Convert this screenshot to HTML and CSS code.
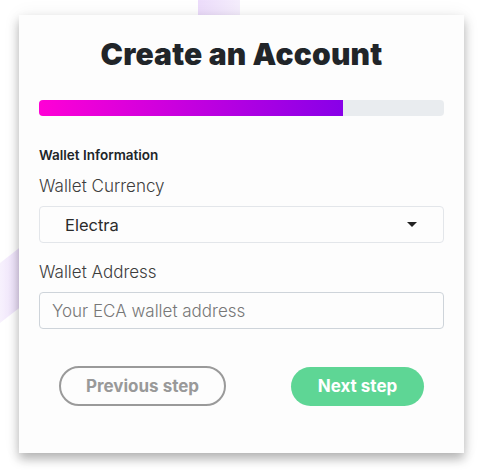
FILE: index.html
```html
<!DOCTYPE html>
<html lang="en">
<head>
<meta charset="utf-8">
<title>Create an Account</title>
<link rel="stylesheet" href="styles.css">
</head>
<body>
<div class="bg-strip"></div>
<div class="bg-band"></div>
<main class="card">
  <h1 class="title">Create an Account</h1>
  <div class="progress"><div class="progress-fill" style="width: 75%"></div></div>
  <h2 class="section">Wallet Information</h2>
  <label class="label">Wallet Currency</label>
  <div class="select">
    <span class="select-value">Electra</span>
    <span class="caret"></span>
  </div>
  <label class="label">Wallet Address</label>
  <div class="input"><span class="placeholder">Your ECA wallet address</span></div>
  <div class="actions">
    <button class="btn btn-prev">Previous step</button>
    <button class="btn btn-next">Next step</button>
  </div>
</main>
</body>
</html>
```
FILE: styles.css
```css
* { box-sizing: border-box; }
html, body { margin: 0; padding: 0; }
body {
  width: 493px;
  height: 474px;
  background: #fff;
  font-family: "Inter", "Open Sans", sans-serif;
  position: relative;
  overflow: hidden;
  padding: 15px 0 0 19px;
}
.bg-strip {
  position: absolute;
  left: 198px;
  top: 0;
  width: 42px;
  height: 30px;
  background: linear-gradient(90deg, #ecdcfb, #f5eefd);
}
.bg-band {
  position: absolute;
  left: 0;
  top: 263px;
  width: 40px;
  height: 60px;
  background: linear-gradient(90deg, #f7f1fd, #e4d0fa);
  transform: skewY(-38deg);
  transform-origin: left top;
}
.card {
  position: relative;
  width: 445px;
  height: 438px;
  background: #fdfdfd;
  box-shadow: 0 6px 10px rgba(0,0,0,0.28), 0 0 18px rgba(0,0,0,0.06);
  padding: 20px 20px 0;
  display: flex;
  flex-direction: column;
}
.title {
  margin: 0;
  text-align: center;
  font-size: 30px;
  font-weight: 900;
  line-height: 36px;
  letter-spacing: 0.2px;
  color: #212529;
  height: 36px;
  margin-top: 1px;
  margin-bottom: 3px;
}
.progress {
  margin-top: 25px;
  height: 16px;
  border-radius: 4px;
  background: #e9ecef;
  overflow: hidden;
}
.progress-fill {
  height: 100%;
  background: linear-gradient(90deg, #ff00d6, #8800e8);
}
.section {
  margin: 31px 0 0;
  font-size: 13.5px;
  font-weight: 600;
  line-height: 17px;
  color: #212529;
}
.label {
  display: block;
  margin-top: 12px;
  font-size: 17px;
  font-weight: 300;
  line-height: 20px;
  color: #3d3d3d;
}
.select, .input {
  margin-top: 10px;
  height: 37px;
  border-radius: 4px;
  display: flex;
  align-items: center;
}
.select {
  border: 1px solid #e3e6ea;
  padding: 0 26px 0 25px;
  justify-content: space-between;
}
.select-value {
  font-size: 16.5px;
  color: #2b2b2b;
}
.caret {
  width: 0;
  height: 0;
  border-left: 5px solid transparent;
  border-right: 5px solid transparent;
  border-top: 5px solid #222;
}
.input {
  border: 1px solid #ced4da;
  padding: 0 12px;
}
.placeholder {
  font-size: 17px;
  font-weight: 300;
  color: #777;
}
.select + .label { margin-top: 19px; }
.actions {
  margin-top: 37px;
  padding: 0 20px;
  display: flex;
  justify-content: space-between;
  align-items: center;
}
.btn {
  font-family: inherit;
  font-size: 17px;
  font-weight: 700;
  border-radius: 20px;
  height: 39px;
  cursor: pointer;
}
.btn-prev {
  width: 167px;
  height: 40px;
  background: transparent;
  border: 2px solid #9a9a9a;
  color: #999;
}
.btn-next {
  width: 133px;
  background: #5ed695;
  border: none;
  color: #fff;
}
```
